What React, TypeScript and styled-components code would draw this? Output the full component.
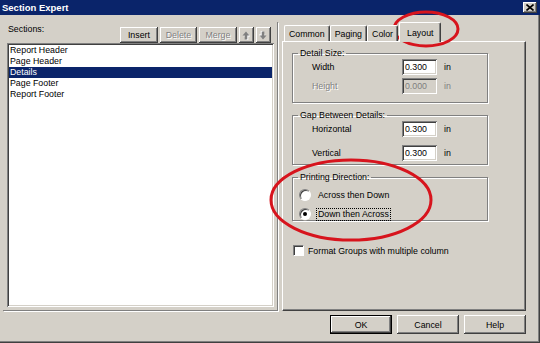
import React, { useState } from 'react';
import styled, { createGlobalStyle, css } from 'styled-components';

const sections = ['Report Header', 'Page Header', 'Details', 'Page Footer', 'Report Footer'];
const tabs = ['Common', 'Paging', 'Color', 'Layout'];

const GlobalStyle = createGlobalStyle`
  html, body {
    margin: 0;
    padding: 0;
    background: #d4d0c8;
  }
  body {
    font-family: "Liberation Sans", Arial, sans-serif;
    font-size: 8.8px;
    color: #000;
  }
  * {
    box-sizing: border-box;
  }
`;

const raised = css`
  background: #d4d0c8;
  box-shadow: inset -1px -1px #404040, inset 1px 1px #ffffff, inset -2px -2px #808080;
`;

const sunken = css`
  box-shadow: inset 1px 1px #808080, inset -1px -1px #ffffff, inset 2px 2px #404040,
    inset -2px -2px #d4d0c8;
`;

const Window = styled.div`
  position: relative;
  width: 540px;
  height: 343px;
  background: #d4d0c8;
  display: flex;
  flex-direction: column;
  box-shadow: inset 0 -1px #404040, inset -1px 0 #404040, inset 0 -2px #808080,
    inset -2px 0 #808080;
`;

const TitleBar = styled.div`
  height: 15px;
  background: #0a246a;
  display: flex;
  align-items: center;
  justify-content: space-between;
  padding: 0 3px 0 2px;
  color: #fff;
  font-weight: bold;
  font-size: 9.5px;
`;

const CloseButton = styled.div`
  ${raised};
  width: 14px;
  height: 11px;
  display: flex;
  align-items: center;
  justify-content: center;
`;

const Body = styled.div`
  flex: 1;
  display: flex;
  flex-direction: column;
  padding: 7px 14px 0 3px;
`;

const Main = styled.div`
  display: flex;
  height: 289px;
`;

const SectionsPane = styled.div`
  width: 276px;
  display: flex;
  flex-direction: column;
  border-right: 1px solid #808080;
  border-bottom: 1px solid #808080;
  box-shadow: 1px 1px 0 #ffffff;
`;

const PaneHeader = styled.div`
  height: 21px;
  display: flex;
  justify-content: space-between;
  padding: 0 6px 0 5px;
`;

const PaneLabel = styled.span`
  padding-top: 2px;
  line-height: 11px;
`;

const Toolbar = styled.div`
  align-self: flex-end;
  display: flex;
  gap: 2px;
`;

const ToolButton = styled.button<{ $disabled?: boolean; $w: number }>`
  ${raised};
  border: none;
  width: ${(p) => p.$w}px;
  height: 16px;
  padding: 0;
  font: inherit;
  display: flex;
  align-items: center;
  justify-content: center;
  color: ${(p) => (p.$disabled ? '#808080' : '#000')};
  text-shadow: ${(p) => (p.$disabled ? '1px 1px #ffffff' : 'none')};
`;

const ListBox = styled.div`
  ${sunken};
  flex: 1;
  margin: 0 3px 3px 4px;
  background: #fff;
  padding: 2px;
`;

const ListItem = styled.div<{ $selected?: boolean }>`
  height: 11px;
  line-height: 11px;
  padding-left: 1px;
  background: ${(p) => (p.$selected ? '#0a246a' : 'transparent')};
  color: ${(p) => (p.$selected ? '#fff' : '#000')};
`;

const TabArea = styled.div`
  width: 245px;
  margin-left: 4px;
  display: flex;
  flex-direction: column;
`;

const TabStrip = styled.div`
  height: 19px;
  display: flex;
  align-items: flex-end;
  padding-left: 2px;
  position: relative;
  z-index: 1;
`;

const Tab = styled.div<{ $active?: boolean }>`
  height: ${(p) => (p.$active ? 20 : 16)}px;
  margin-bottom: ${(p) => (p.$active ? -1 : 0)}px;
  padding: 0 ${(p) => (p.$active ? 7 : 4)}px;
  margin-left: ${(p) => (p.$active ? 1 : 0)}px;
  display: flex;
  align-items: center;
  background: #d4d0c8;
  border-top: 1px solid #fff;
  border-left: 1px solid #fff;
  border-right: 1px solid #404040;
  border-radius: 2px 2px 0 0;
  box-shadow: inset -1px 0 #808080;
  padding-top: ${(p) => (p.$active ? 0 : 1)}px;
`;

const TabPanel = styled.div`
  flex: 1;
  border-top: 1px solid #fff;
  border-left: 1px solid #fff;
  border-right: 1px solid #404040;
  border-bottom: 1px solid #404040;
  box-shadow: inset -1px -1px #808080;
  padding: 6px 0 0 9px;
  display: flex;
  flex-direction: column;
`;

const Group = styled.fieldset<{ $gap: number; $pb: number }>`
  width: 196px;
  margin: 0 0 7px 0;
  padding: 0 0 ${(p) => p.$pb}px 0;
  border: 1px solid #808080;
  box-shadow: inset 1px 1px #ffffff, 1px 1px 0 #ffffff;
  display: flex;
  flex-direction: column;
  gap: ${(p) => p.$gap}px;
`;

const Legend = styled.legend`
  margin-left: 5px;
  padding: 0 2px;
  line-height: 11px;
`;

const FieldRow = styled.div<{ $disabled?: boolean }>`
  display: flex;
  align-items: center;
  height: 16px;
  padding-left: 19px;
  color: ${(p) => (p.$disabled ? '#808080' : '#000')};
`;

const FieldLabel = styled.span<{ $disabled?: boolean }>`
  width: 90px;
  text-shadow: ${(p) => (p.$disabled ? '1px 1px #ffffff' : 'none')};
`;

const Input = styled.div<{ $disabled?: boolean }>`
  ${sunken};
  width: 35px;
  height: 16px;
  background: ${(p) => (p.$disabled ? '#d4d0c8' : '#ffffff')};
  color: ${(p) => (p.$disabled ? '#808080' : '#000')};
  padding: 3px 0 0 3px;
  line-height: 10px;
`;

const Unit = styled.span`
  margin-left: 7px;
`;

const RadioRow = styled.div<{ $top?: number }>`
  display: flex;
  align-items: center;
  height: 12px;
  padding-left: 6px;
  margin-top: ${(p) => p.$top ?? 0}px;
`;

const RadioCircle = styled.span<{ $checked?: boolean }>`
  width: 12px;
  height: 12px;
  border-radius: 50%;
  background: #fff;
  border: 1px solid;
  border-color: #808080 #ffffff #ffffff #808080;
  box-shadow: inset 1px 1px #404040, 0 0 0 0.5px #d4d0c8;
  display: flex;
  align-items: center;
  justify-content: center;
  margin-right: 6px;

  &::after {
    content: '';
    width: 4px;
    height: 4px;
    border-radius: 50%;
    background: ${(p) => (p.$checked ? '#000' : 'transparent')};
  }
`;

const RadioText = styled.span<{ $focused?: boolean }>`
  line-height: 11px;
  padding: 0 1px;
  outline: ${(p) => (p.$focused ? '1px dotted #000' : 'none')};
`;

const CheckRow = styled.div`
  display: flex;
  align-items: center;
  margin-top: 17px;
  padding-left: 1px;
`;

const CheckBox = styled.span`
  width: 11px;
  height: 11px;
  background: #fff;
  border: 1px solid;
  border-color: #808080 #ffffff #ffffff #808080;
  box-shadow: inset 1px 1px #404040;
  margin-right: 4px;
`;

const ButtonRow = styled.div`
  display: flex;
  justify-content: flex-end;
  gap: 5px;
  margin-top: 4px;
`;

const DialogButton = styled.button<{ $default?: boolean }>`
  ${raised};
  border: none;
  width: 62px;
  height: 19px;
  padding: 0;
  font: inherit;
  ${(p) =>
    p.$default &&
    css`
      box-shadow: inset 0 0 0 1px #000, inset -2px -2px #404040, inset 2px 2px #ffffff,
        inset -3px -3px #808080;
    `}
`;

const Annotations = styled.svg`
  position: absolute;
  left: 0;
  top: 0;
  pointer-events: none;
`;

const Arrow = ({ down }: { down?: boolean }) => (
  <svg width="8" height="9" viewBox="0 0 8 9">
    <g transform={down ? 'rotate(180 4 4.5)' : undefined}>
      <path d="M4 0.5 L7.5 4.5 L5.3 4.5 L5.3 8.5 L2.7 8.5 L2.7 4.5 L0.5 4.5 Z" fill="#ffffff" transform="translate(1 1)" />
      <path d="M4 0.5 L7.5 4.5 L5.3 4.5 L5.3 8.5 L2.7 8.5 L2.7 4.5 L0.5 4.5 Z" fill="#808080" />
    </g>
  </svg>
);

const App = () => {
  const [selected, setSelected] = useState('Details');

  return (
    <>
      <GlobalStyle />
      <Window>
        <TitleBar>
          <span>Section Expert</span>
          <CloseButton>
            <svg width="8" height="7" viewBox="0 0 8 7">
              <path d="M0.5 0.5 L7.5 6.5 M7.5 0.5 L0.5 6.5" stroke="#000" strokeWidth="1.6" />
            </svg>
          </CloseButton>
        </TitleBar>
        <Body>
          <Main>
            <SectionsPane>
              <PaneHeader>
                <PaneLabel>Sections:</PaneLabel>
                <Toolbar>
                  <ToolButton $w={38}>Insert</ToolButton>
                  <ToolButton $w={37} $disabled>Delete</ToolButton>
                  <ToolButton $w={38} $disabled>Merge</ToolButton>
                  <ToolButton $w={15} $disabled>
                    <Arrow />
                  </ToolButton>
                  <ToolButton $w={15} $disabled>
                    <Arrow down />
                  </ToolButton>
                </Toolbar>
              </PaneHeader>
              <ListBox>
                {sections.map((s) => (
                  <ListItem key={s} $selected={s === selected} onClick={() => setSelected(s)}>
                    {s}
                  </ListItem>
                ))}
              </ListBox>
            </SectionsPane>
            <TabArea>
              <TabStrip>
                {tabs.map((t) => (
                  <Tab key={t} $active={t === 'Layout'}>
                    {t}
                  </Tab>
                ))}
              </TabStrip>
              <TabPanel>
                <Group $gap={3} $pb={8}>
                  <Legend>Detail Size:</Legend>
                  <FieldRow>
                    <FieldLabel>Width</FieldLabel>
                    <Input>0.300</Input>
                    <Unit>in</Unit>
                  </FieldRow>
                  <FieldRow $disabled>
                    <FieldLabel $disabled>Height</FieldLabel>
                    <Input $disabled>0.000</Input>
                    <Unit>in</Unit>
                  </FieldRow>
                </Group>
                <Group $gap={8} $pb={3}>
                  <Legend>Gap Between Details:</Legend>
                  <FieldRow>
                    <FieldLabel>Horizontal</FieldLabel>
                    <Input>0.300</Input>
                    <Unit>in</Unit>
                  </FieldRow>
                  <FieldRow>
                    <FieldLabel>Vertical</FieldLabel>
                    <Input>0.300</Input>
                    <Unit>in</Unit>
                  </FieldRow>
                </Group>
                <Group $gap={7} $pb={0}>
                  <Legend>Printing Direction:</Legend>
                  <RadioRow $top={6}>
                    <RadioCircle />
                    <RadioText>Across then Down</RadioText>
                  </RadioRow>
                  <RadioRow>
                    <RadioCircle $checked />
                    <RadioText $focused>Down then Across</RadioText>
                  </RadioRow>
                </Group>
                <CheckRow>
                  <CheckBox />
                  <span>Format Groups with multiple column</span>
                </CheckRow>
              </TabPanel>
            </TabArea>
          </Main>
          <ButtonRow>
            <DialogButton $default>OK</DialogButton>
            <DialogButton>Cancel</DialogButton>
            <DialogButton>Help</DialogButton>
          </ButtonRow>
        </Body>
        <Annotations width="540" height="343">
          <ellipse cx="426" cy="29" rx="32" ry="17" fill="none" stroke="#d7141d" strokeWidth="3" />
          <ellipse cx="351" cy="200" rx="80" ry="40" fill="none" stroke="#d7141d" strokeWidth="3" />
        </Annotations>
      </Window>
    </>
  );
};

export default App;
